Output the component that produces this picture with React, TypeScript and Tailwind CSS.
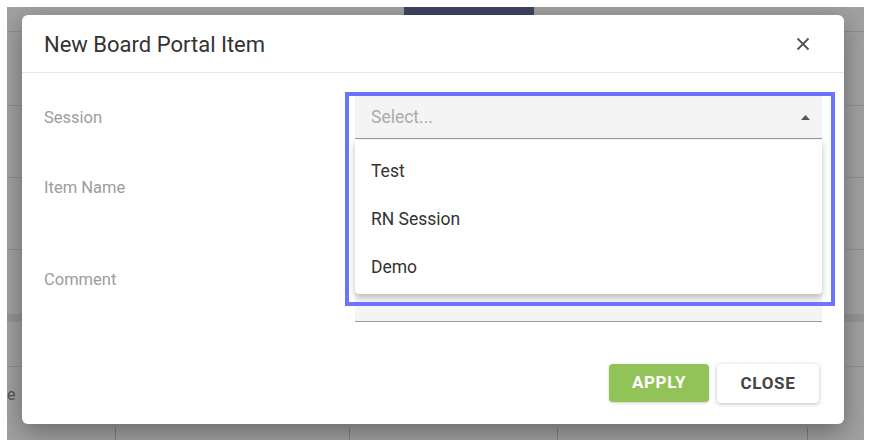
import React from 'react'

const font = { fontFamily: 'Roboto, "Liberation Sans", sans-serif' }

const options = ['Test', 'RN Session', 'Demo']

// ----------------------------------------------------------------------

function Backdrop() {
  return (
    <div className="flex h-full flex-col bg-[#a1a1a1]">
      <div className="flex h-[25px] shrink-0 border-b border-[#909090]">
        <div className="ml-[397px] h-[8px] w-[130px] bg-[#3f4560]" />
      </div>
      <div className="h-[74px] shrink-0 border-b border-[#909090]" />
      <div className="h-[72px] shrink-0 border-b border-[#909090]" />
      <div className="h-[72px] shrink-0 border-b border-[#909090]" />
      <div className="h-[72px] shrink-0 border-b-[8px] border-[#959595]" />
      <div className="h-[45px] shrink-0 border-b border-[#909090]" />
      <div className="flex h-[60px] shrink-0 items-start pt-[16px] text-[16px] text-[#555]">
        <span>e</span>
      </div>
      <div className="flex flex-1">
        <div className="w-[109px] border-r border-[#808080]" />
        <div className="w-[234px] border-r border-[#808080]" />
        <div className="w-[208px] border-r border-[#808080]" />
        <div className="w-[250px] border-r border-[#808080]" />
      </div>
    </div>
  )
}

function Label({ children }: { children: React.ReactNode }) {
  return (
    <div className="flex h-[43px] w-[311px] shrink-0 items-center pt-[2px] text-[16.5px] text-[#9c9c9c]">
      {children}
    </div>
  )
}

export default function App() {
  return (
    <div className="h-[447px] w-[871px] bg-white p-[7px]" style={font}>
      <div className="relative h-[433px] w-[857px] overflow-hidden">
        <Backdrop />

        {/* modal */}
        <div className="absolute left-[15px] top-[8px] flex h-[409px] w-[822px] flex-col rounded-md bg-white shadow-[0_8px_26px_rgba(0,0,0,0.35)]">
          <div className="flex h-[58px] shrink-0 items-center justify-between border-b border-[#e6e6e6] pl-[22px] pr-[34px] pt-[1px]">
            <span className="text-[22px] text-[#333]">New Board Portal Item</span>
            <svg width="14" height="14" viewBox="0 0 14 14" className="text-[#555]">
              <path d="M1.5 1.5 L12.5 12.5 M12.5 1.5 L1.5 12.5" stroke="currentColor" strokeWidth="1.8" />
            </svg>
          </div>

          <div className="relative flex flex-1 flex-col pl-[22px] pr-[22px] pt-[23px]">
            <div className="flex">
              <Label>Session</Label>
              <div className="relative flex-1">
                <div className="flex h-[43px] items-center justify-between border-b border-[#9a9a9a] bg-[#f4f4f4] pl-[16px] pr-[12px]">
                  <span className="pt-[1px] text-[17.5px] text-[#ababab]">Select...</span>
                  <svg width="9" height="5" viewBox="0 0 9 5">
                    <path d="M0 5 L4.5 0 L9 5 Z" fill="#555" />
                  </svg>
                </div>
                <div className="absolute left-0 right-0 top-[44px] z-10 rounded-b bg-white pb-[3px] pt-[7px] shadow-[0_3px_6px_rgba(0,0,0,0.25)]">
                  {options.map((o) => (
                    <div key={o} className="flex h-[48px] items-center pl-[16px] text-[17.5px] text-[#333]">
                      {o}
                    </div>
                  ))}
                </div>
              </div>
            </div>

            <div className="mt-[27px] flex">
              <Label>Item Name</Label>
              <div className="h-[44px] flex-1 border-b border-[#9a9a9a] bg-[#f4f4f4]" />
            </div>

            <div className="mt-[48px] flex">
              <Label>Comment</Label>
              <div className="h-[64px] flex-1 border-b border-[#9a9a9a] bg-[#f4f4f4]" />
            </div>

            <div className="mt-[42px] flex justify-end gap-[8px] pr-[3px]">
              <button className="h-[38px] w-[100px] rounded bg-[#92c358] text-[17px] font-bold tracking-[0.04em] text-white shadow-[0_1px_3px_rgba(0,0,0,0.2)]">
                APPLY
              </button>
              <button className="h-[39px] w-[102px] rounded bg-white text-[17px] font-bold tracking-[0.04em] text-[#444] shadow-[0_1px_4px_rgba(0,0,0,0.25)]">
                CLOSE
              </button>
            </div>

            {/* focus highlight */}
            <div className="pointer-events-none absolute left-[323px] top-[19px] z-20 h-[214px] w-[490px] border-4 border-[#6b73ff]" />
          </div>
        </div>
      </div>
    </div>
  )
}
